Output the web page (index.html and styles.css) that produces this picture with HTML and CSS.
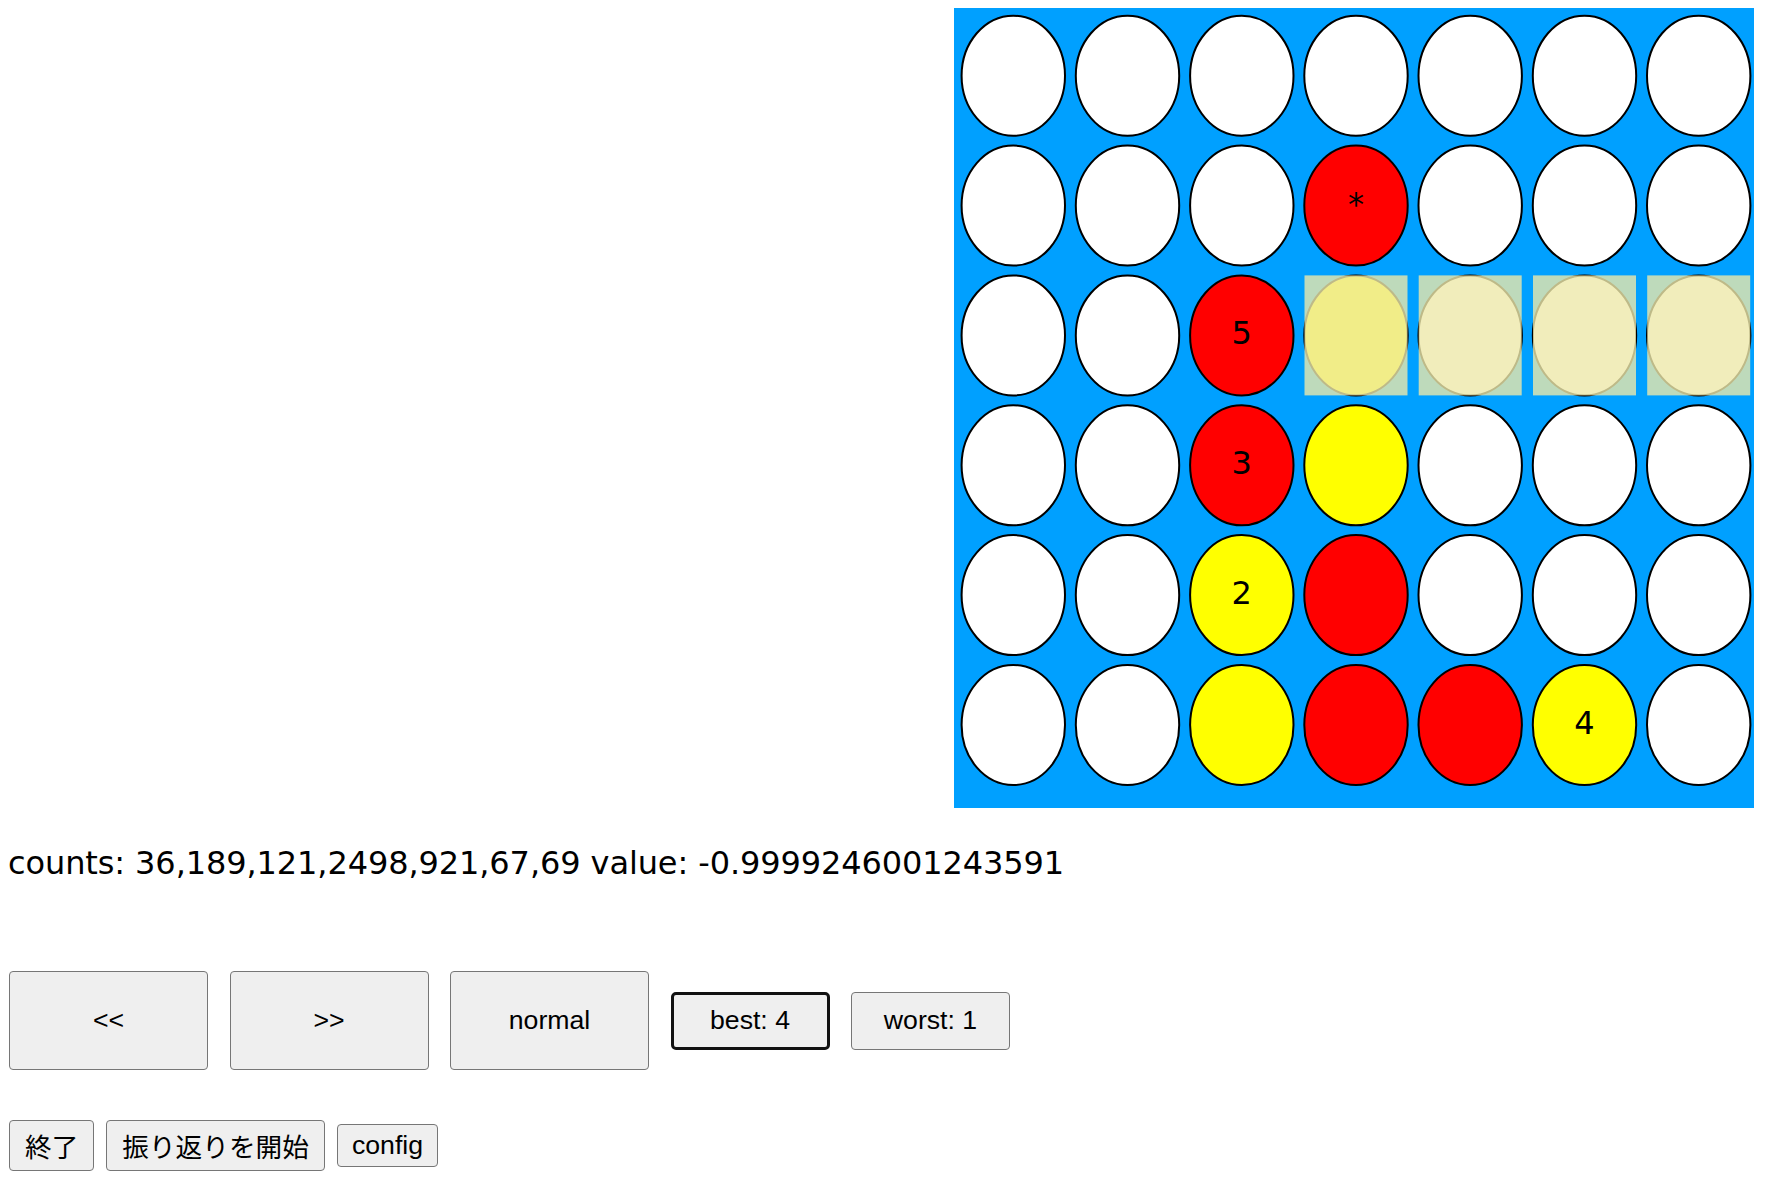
FILE: index.html
```html
<!DOCTYPE html>
<html lang="ja">
<head>
<meta charset="utf-8">
<title>Connect Four</title>
<link rel="stylesheet" href="styles.css">
</head>
<body>
<div class="top">
  <svg class="board" width="800" height="800" viewBox="0 0 800 800">
    <rect class="bg" x="0" y="0" width="800" height="800"/>
    <g class="cells">
      <ellipse class="e" cx="59.3" cy="67.7" rx="51.7" ry="60"/>
      <ellipse class="e" cx="173.5" cy="67.7" rx="51.7" ry="60"/>
      <ellipse class="e" cx="287.8" cy="67.7" rx="51.7" ry="60"/>
      <ellipse class="e" cx="402.0" cy="67.7" rx="51.7" ry="60"/>
      <ellipse class="e" cx="516.2" cy="67.7" rx="51.7" ry="60"/>
      <ellipse class="e" cx="630.5" cy="67.7" rx="51.7" ry="60"/>
      <ellipse class="e" cx="744.7" cy="67.7" rx="51.7" ry="60"/>

      <ellipse class="e" cx="59.3" cy="197.6" rx="51.7" ry="60"/>
      <ellipse class="e" cx="173.5" cy="197.6" rx="51.7" ry="60"/>
      <ellipse class="e" cx="287.8" cy="197.6" rx="51.7" ry="60"/>
      <ellipse class="r" cx="402.0" cy="197.6" rx="51.7" ry="60"/>
      <ellipse class="e" cx="516.2" cy="197.6" rx="51.7" ry="60"/>
      <ellipse class="e" cx="630.5" cy="197.6" rx="51.7" ry="60"/>
      <ellipse class="e" cx="744.7" cy="197.6" rx="51.7" ry="60"/>

      <ellipse class="e" cx="59.3" cy="327.4" rx="51.7" ry="60"/>
      <ellipse class="e" cx="173.5" cy="327.4" rx="51.7" ry="60"/>
      <ellipse class="r" cx="287.8" cy="327.4" rx="51.7" ry="60"/>
      <ellipse class="y" cx="402.0" cy="327.4" rx="51.7" ry="60"/>
      <ellipse class="e" cx="516.2" cy="327.4" rx="51.7" ry="60"/>
      <ellipse class="e" cx="630.5" cy="327.4" rx="51.7" ry="60"/>
      <ellipse class="e" cx="744.7" cy="327.4" rx="51.7" ry="60"/>

      <ellipse class="e" cx="59.3" cy="457.3" rx="51.7" ry="60"/>
      <ellipse class="e" cx="173.5" cy="457.3" rx="51.7" ry="60"/>
      <ellipse class="r" cx="287.8" cy="457.3" rx="51.7" ry="60"/>
      <ellipse class="y" cx="402.0" cy="457.3" rx="51.7" ry="60"/>
      <ellipse class="e" cx="516.2" cy="457.3" rx="51.7" ry="60"/>
      <ellipse class="e" cx="630.5" cy="457.3" rx="51.7" ry="60"/>
      <ellipse class="e" cx="744.7" cy="457.3" rx="51.7" ry="60"/>

      <ellipse class="e" cx="59.3" cy="587.1" rx="51.7" ry="60"/>
      <ellipse class="e" cx="173.5" cy="587.1" rx="51.7" ry="60"/>
      <ellipse class="y" cx="287.8" cy="587.1" rx="51.7" ry="60"/>
      <ellipse class="r" cx="402.0" cy="587.1" rx="51.7" ry="60"/>
      <ellipse class="e" cx="516.2" cy="587.1" rx="51.7" ry="60"/>
      <ellipse class="e" cx="630.5" cy="587.1" rx="51.7" ry="60"/>
      <ellipse class="e" cx="744.7" cy="587.1" rx="51.7" ry="60"/>

      <ellipse class="e" cx="59.3" cy="717.0" rx="51.7" ry="60"/>
      <ellipse class="e" cx="173.5" cy="717.0" rx="51.7" ry="60"/>
      <ellipse class="y" cx="287.8" cy="717.0" rx="51.7" ry="60"/>
      <ellipse class="r" cx="402.0" cy="717.0" rx="51.7" ry="60"/>
      <ellipse class="r" cx="516.2" cy="717.0" rx="51.7" ry="60"/>
      <ellipse class="y" cx="630.5" cy="717.0" rx="51.7" ry="60"/>
      <ellipse class="e" cx="744.7" cy="717.0" rx="51.7" ry="60"/>
    </g>
    <g class="marks">
      <rect x="350.5" y="267.4" width="103" height="120"/>
      <rect x="464.7" y="267.4" width="103" height="120"/>
      <rect x="579.0" y="267.4" width="103" height="120"/>
      <rect x="693.2" y="267.4" width="103" height="120"/>
    </g>
    <g class="labels">
      <text x="402.0" y="197.6">*</text>
      <text x="287.8" y="327.4">5</text>
      <text x="287.8" y="457.3">3</text>
      <text x="287.8" y="587.1">2</text>
      <text x="630.5" y="717.0">4</text>
    </g>
  </svg>
</div>
<div class="counts">counts: 36,189,121,2498,921,67,69 value: -0.9999246001243591</div>
<div class="controls">
  <button class="btn big">&lt;&lt;</button>
  <button class="btn big">&gt;&gt;</button>
  <button class="btn big">normal</button>
  <button class="btn small best">best: 4</button>
  <button class="btn small">worst: 1</button>
</div>
<div class="actions">
  <button class="btn act">終了</button>
  <button class="btn act">振り返りを開始</button>
  <button class="btn act config">config</button>
</div>
</body>
</html>
```
FILE: styles.css
```css
body {
  margin: 8px;
  font-family: "DejaVu Sans", sans-serif;
  color: #000;
  background: #fff;
}

.top {
  display: flex;
  justify-content: flex-end;
  padding-right: 20px;
}

.board {
  display: block;
}

.board .bg {
  fill: #00a0ff;
}

.cells ellipse {
  stroke: #000;
  stroke-width: 2;
}

.cells .e { fill: #ffffff; }
.cells .r { fill: #ff0000; }
.cells .y { fill: #ffff00; }

.marks rect {
  fill: palegoldenrod;
  opacity: 0.8;
}

.labels text {
  font-family: "DejaVu Sans", sans-serif;
  font-size: 32px;
  text-anchor: middle;
  dominant-baseline: middle;
  fill: #000;
}

.counts {
  margin-top: 36px;
  font-size: 32px;
  letter-spacing: -0.1px;
  line-height: normal;
  white-space: nowrap;
}

.controls {
  margin-top: 89px;
  padding-left: 1px;
  display: flex;
  align-items: center;
  gap: 21.5px;
}

.actions {
  margin-top: 50px;
  padding-left: 1px;
  display: flex;
  align-items: center;
  gap: 12px;
}

.btn {
  box-sizing: border-box;
  margin: 0;
  font-family: "Liberation Sans", "Noto Sans CJK JP", sans-serif;
  font-size: 26.67px;
  color: #000;
  background: #efefef;
  border: 1px solid #767676;
  border-radius: 4px;
}

.big {
  width: 199px;
  height: 99px;
  padding: 0;
}

.small {
  width: 159px;
  height: 58px;
  padding: 0;
}

.best {
  border: 3px solid #111;
  border-radius: 5px;
}

.act {
  padding: 5px 15px;
}

.act.config {
  padding: 5px 14px;
}
```
